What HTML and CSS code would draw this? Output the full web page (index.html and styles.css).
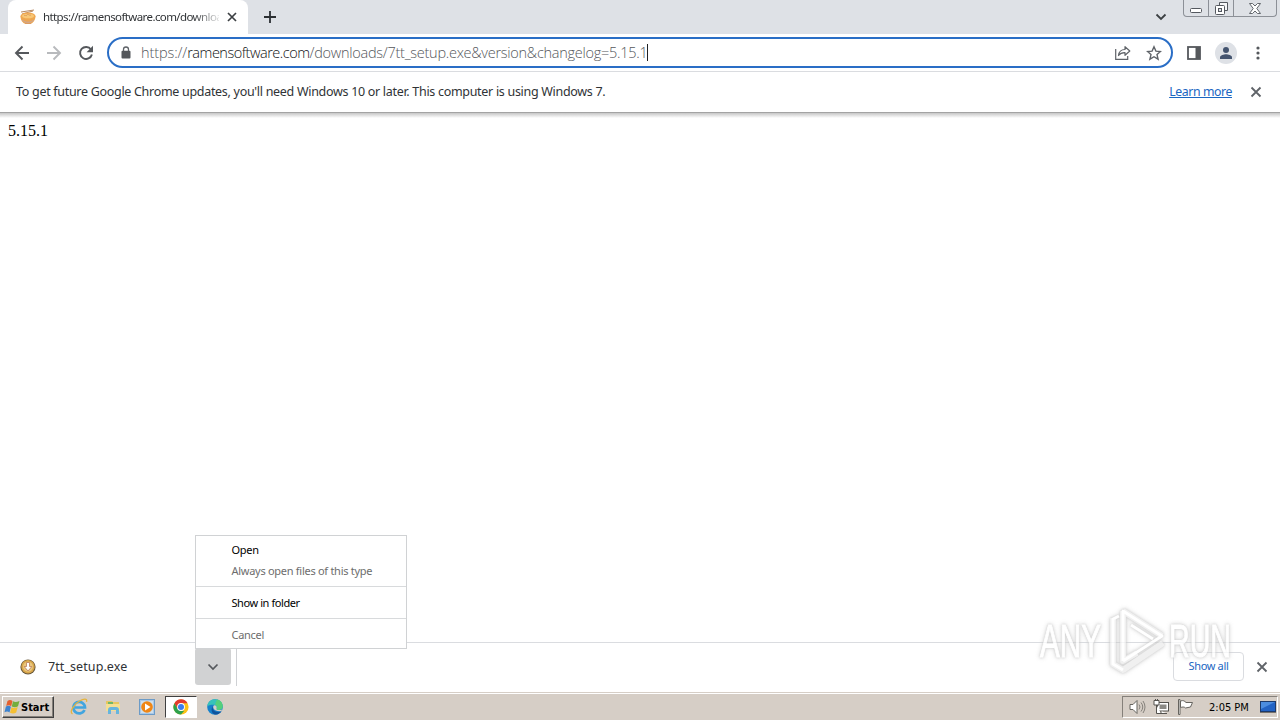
FILE: index.html
```html
<!DOCTYPE html>
<html lang="en">
<head>
  <meta charset="UTF-8">
  <title>https://ramensoftware.com/downloads</title>
  <link rel="stylesheet" href="styles.css">
</head>
<body>

<div class="desktop">

  <!-- Tab strip -->
  <div class="tab-strip">
    <div class="tab">
      <svg class="favicon" width="16" height="16" viewBox="0 0 16 16">
        <path d="M1 3l13-2M2 5l11-3" stroke="#b98a62" stroke-width="1" fill="none"/>
        <path d="M.5 7h15c0 4-2.500 7-5 8h-5c-3-1-5-4-5-8z" fill="#eba654"/>
        <ellipse cx="8" cy="7" rx="7.500" ry="3.500" fill="#f0a850"/>
        <ellipse cx="8" cy="7" rx="6" ry="2.300" fill="#f8c877"/>
        <path d="M4 7c1-2 2 1 3-1s2 1 4 0M5 14.500h6" stroke="#dd9c60" fill="none"/>
        <path d="M2.500 11c1.500 3 9.500 3 11 0" stroke="#c9a6a0" fill="none"/>
      </svg>
      <span class="tab-title">https://ramensoftware.com/downloa</span>
      <svg class="tab-close" width="10" height="10" viewBox="0 0 10 10"><path d="M1 1l8 8M9 1l-8 8" stroke="#3c4043" stroke-width="1.700"/></svg>
    </div>
    <svg class="new-tab" width="12" height="12" viewBox="0 0 12 12"><path d="M6 0v12M0 6h12" stroke="#2b2f33" stroke-width="1.800"/></svg>
    <svg class="tab-search" width="12" height="8" viewBox="0 0 12 8"><path d="M1.500 1.500L6 6l4.500-4.500" fill="none" stroke="#3c4043" stroke-width="1.800"/></svg>
    <div class="window-buttons">
      <span class="win-min"><svg width="13" height="5" viewBox="0 0 13 5"><rect x=".5" y=".5" width="11" height="4" rx="1" fill="#fff" stroke="#54585f"/></svg></span>
      <span class="win-max"><svg width="13" height="13" viewBox="0 0 13 13"><path d="M4.500 3.500v-3h8v8h-3" fill="#f5f6f8" stroke="#54585f"/><rect x=".5" y="3.500" width="9" height="9" rx="1" fill="#fff" stroke="#54585f"/><rect x="3.500" y="6.500" width="3" height="3" fill="#dee1e6" stroke="#54585f"/></svg></span>
      <span class="win-close"><svg width="12" height="11" viewBox="0 0 12 11"><path d="M.5.500h3L6 3 8.500.500h3L7.800 5.500l3.700 5h-3L6 8l-2.500 2.500h-3l3.700-5z" fill="#fff" stroke="#54585f" stroke-width=".9"/></svg></span>
    </div>
  </div>

  <!-- Toolbar -->
  <div class="toolbar">
    <div class="nav">
      <svg width="16" height="16" viewBox="0 0 16 16"><path d="M15 8H2.500M8.500 1.500L2 8l6.500 6.500" fill="none" stroke="#55585c" stroke-width="1.900"/></svg>
      <svg width="16" height="16" viewBox="0 0 16 16"><path d="M1 8h12.500M7.500 1.500L14 8l-6.500 6.500" fill="none" stroke="#b8babd" stroke-width="1.900"/></svg>
      <svg width="16" height="16" viewBox="0 0 16 16"><path d="M13 4.500A6 6 0 1 0 13.900 9.500" fill="none" stroke="#55585c" stroke-width="1.900"/><path d="M15 .8v6.400H8.600z" fill="#55585c"/></svg>
    </div>
    <div class="omnibox">
      <svg class="lock" width="10" height="13" viewBox="0 0 10 13"><path d="M2.500 6V3.500a2.500 2.500 0 0 1 5 0V6" fill="none" stroke="#5f6368" stroke-width="1.300"/><rect x=".5" y="4.800" width="9" height="7.700" rx="1" fill="#55585c"/></svg>
      <span class="url">https://<span class="host">ramensoftware.com</span><span class="path">/downloads/7tt_setup.exe&amp;version&amp;changelog=5.15.1</span></span>
      <span class="caret"></span>
      <svg class="share" width="16" height="15" viewBox="0 0 16 15"><path d="M.700 4v10.300h12V11" fill="none" stroke="#5f6368" stroke-width="1.200"/><path d="M3.500 10.500c.5-4 3-6 6.500-6V1.700l4.800 4.300-4.800 4.300V7.700c-3-.1-5 .8-6.500 2.800z" fill="none" stroke="#5f6368" stroke-width="1.200" stroke-linejoin="round"/></svg>
      <svg class="star" width="16" height="16" viewBox="0 0 16 16"><path d="M8 1.800l1.900 4.300 4.600.4L11 9.600l1.100 4.600L8 11.700l-4.100 2.500L5 9.600 1.500 6.500l4.600-.4z" fill="none" stroke="#5f6368" stroke-width="1.400"/></svg>
    </div>
    <svg class="side-panel" width="14" height="14" viewBox="0 0 14 14"><rect x="1" y="1" width="12" height="12" fill="#fff" stroke="#55585c" stroke-width="1.800"/><path d="M8.500 1H13v12H8.500z" fill="#55585c"/></svg>
    <span class="avatar"><svg width="14" height="12" viewBox="0 0 14 12"><circle cx="7" cy="3" r="3" fill="#44546f"/><path d="M1 12v-1.600C1 8 5 7.200 7 7.200s6 .8 6 3.200V12z" fill="#44546f"/></svg></span>
    <svg class="more" width="4" height="14" viewBox="0 0 4 14"><circle cx="2" cy="2" r="1.600" fill="#55585c"/><circle cx="2" cy="7" r="1.600" fill="#55585c"/><circle cx="2" cy="12" r="1.600" fill="#55585c"/></svg>
  </div>

  <!-- Info bar -->
  <div class="infobar">
    <span class="infobar-text">To get future Google Chrome updates, you'll need Windows 10 or later. This computer is using Windows 7.</span>
    <a class="learn-more">Learn more</a>
    <svg class="infobar-close" width="12" height="12" viewBox="0 0 12 12"><path d="M1.500 1.500l9 9M10.500 1.500l-9 9" stroke="#5f6368" stroke-width="1.800"/></svg>
  </div>

  <!-- Page content -->
  <div class="page">5.15.1</div>

  <!-- Download shelf -->
  <div class="shelf">
    <svg class="file-icon" width="16" height="16" viewBox="0 0 16 16">
      <circle cx="8" cy="8" r="7.600" fill="#69593c"/>
      <circle cx="8" cy="7.700" r="6.700" fill="#d9a64b"/>
      <circle cx="8" cy="7.700" r="5" fill="#e9c77e"/>
      <path d="M6.500 3.500h3v4h2.300L8 12 4.200 7.500h2.300z" fill="#fff" stroke="#b56f4b" stroke-width=".7"/>
    </svg>
    <span class="file-name">7tt_setup.exe</span>
    <div class="file-menu-button"><svg width="12" height="8" viewBox="0 0 12 8"><path d="M1.500 1.500L6 6l4.500-4.500" fill="none" stroke="#55585c" stroke-width="1.700"/></svg></div>
    <span class="shelf-divider"></span>
    <div class="show-all">Show all</div>
    <svg class="shelf-close" width="12" height="12" viewBox="0 0 12 12"><path d="M1.500 1.500l9 9M10.500 1.500l-9 9" stroke="#5f6368" stroke-width="1.800"/></svg>
  </div>

  <!-- Taskbar -->
  <div class="taskbar">
    <div class="start">
      <svg width="17" height="16" viewBox="0 0 16 16">
        <path d="M3 2c2-1.500 3.500-1 5 0L6.700 7.200c-1.500-1-3-1.200-5-.2z" fill="#e4602f"/>
        <path d="M8.500 2.300c1.700 1 3.500 1 6.500-.3l-1.500 5.200c-2 1.200-4 1.200-6.200.3z" fill="#74ad3d"/>
        <path d="M1.400 7.500c2-1 3.500-.8 5 .2L5 13.400c-1.500-1-3-1.100-5-.1z" fill="#3d83cf"/>
        <path d="M7 8.200c1.700 1 3.500 1 6.200-.2l-1.500 5.500c-2 1.200-4 1.200-6.200.2z" fill="#f5bf32"/>
      </svg>
      <span>Start</span>
    </div>
    <div class="quick-launch">
      <span class="task">
        <svg width="18" height="18" viewBox="0 0 18 18"><path d="M14.500 12A5.800 5.800 0 1 1 15 9.500H5" fill="none" stroke="#42a5df" stroke-width="2.700"/><path d="M2.500 16C-1 14 4 6 9.500 3c4-2.500 8-3 7 .8" fill="none" stroke="#e5b43d" stroke-width="1.300"/></svg>
      </span>
      <span class="task">
        <svg width="16" height="16" viewBox="0 0 16 16"><path d="M1 2h6l1 1h6v9H1z" fill="#e8c760"/><path d="M3 3h5v3H3z" fill="#6fb869"/><path d="M1 5h14v7H1z" fill="#f5df93"/><path d="M3 15v-4c0-2 1-3 3-3h5c2 0 3 1 3 3v4h-3v-4H6v4z" fill="#67b5dd"/></svg>
      </span>
      <span class="task">
        <svg width="16" height="16" viewBox="0 0 16 16"><rect x=".5" y=".5" width="15" height="15" fill="#a9c9e8" stroke="#6c9bc7"/><rect x="2" y="2" width="12" height="12" fill="#cfdfeb"/><circle cx="8" cy="8" r="5.800" fill="#ef8615"/><path d="M6 4.500v7L11.500 8z" fill="#fff"/></svg>
      </span>
      <span class="task task-active">
        <svg width="16" height="16" viewBox="0 0 16 16"><circle cx="8" cy="8" r="7.600" fill="#fbc116"/><path d="M1.400 4.200A7.600 7.600 0 0 1 14.600 4.200H8L4.700 9.900z" fill="#e33b2e"/><path d="M1.400 4.200l3.300 5.700L8 11.800h3.300L8 15.600A7.600 7.600 0 0 1 1.400 4.200z" fill="#2da14c"/><circle cx="8" cy="8" r="3.900" fill="#fff"/><circle cx="8" cy="8" r="3" fill="#3b7ded"/></svg>
      </span>
      <span class="task">
        <svg width="16" height="16" viewBox="0 0 16 16"><circle cx="8" cy="8" r="7.800" fill="#1681cb"/><path d="M.300 7C1 2.500 4 .2 8 .2c5 0 7.700 3.500 7.700 7 0 2.500-2 3.800-4 3.800-2.500 0-3-.8-2.200-1.700C11 7 7 3.800.3 7z" fill="#37c2ba"/><path d="M10 .5c4 .8 5.700 3.700 5.700 6.700 0 2.500-2 3.800-4 3.800-2.500 0-3-.8-2.200-1.700C10.500 7.600 9.500 6 8 5.500z" fill="#55cf7b"/><path d="M6 7c-1.500 4 3 7.500 8.500 5.200-1.500 2.200-4 3.500-6.500 3.400C4.500 14.500 3.500 10 6 7z" fill="#10539c"/><path d="M9.500 9.300C10.300 8 9 6 7 6.300 5 8 6.500 13 14.500 12.200l.5-1.700c-2 1-6.500.9-5.500-1.200z" fill="#d6cec6"/></svg>
      </span>
    </div>
    <div class="tray">
      <svg width="17" height="16" viewBox="0 0 17 16"><path d="M1 5.500h3l4-4v13l-4-4H1z" fill="#fff" stroke="#66645f"/><path d="M10 5.500q2 2.500 0 5M12 3.500q3.500 4.500 0 9M14 2q4 6 0 12" fill="none" stroke="#85817b"/></svg>
      <svg width="17" height="16" viewBox="0 0 17 16"><rect x="4.500" y="3.500" width="11" height="8.500" fill="#fff" stroke="#54524e"/><rect x="6.500" y="5.500" width="7" height="4.500" fill="#8b8985"/><path d="M8 12v2.500h6M1 1.500h5v4.500H1zM2.500 0v2M4.500 0v2M3.500 6v8.500H8" fill="#fff" stroke="#54524e"/></svg>
      <svg width="17" height="16" viewBox="0 0 17 16"><path d="M1.500.500v15h1.500V.500z" fill="#fff" stroke="#66645f"/><path d="M3.500 2c3-1 4 0 5.500 1.500h6.500L13.500 8l-5 1C7 7.500 5.500 8 3.500 8.500z" fill="#fff" stroke="#66645f"/></svg>
      <span class="clock">2:05 PM</span>
      <svg class="show-desktop" width="16" height="13" viewBox="0 0 16 13"><rect x=".5" y=".5" width="15" height="10" fill="#2363c4" stroke="#1d3a6b"/><path d="M1 1h14L1 8z" fill="#4c8de0"/><path d="M0 11.500h16" stroke="#77726d"/></svg>
    </div>
  </div>

  <!-- Download item menu -->
  <div class="menu">
    <div class="menu-item">Open</div>
    <div class="menu-item disabled">Always open files of this type</div>
    <div class="menu-sep"></div>
    <div class="menu-item folder">Show in folder</div>
    <div class="menu-sep"></div>
    <div class="menu-item disabled">Cancel</div>
  </div>

  <!-- Watermark -->
  <svg class="watermark" width="204" height="70" viewBox="0 0 204 70">
    <text x="5" y="52" textLength="61" lengthAdjust="spacingAndGlyphs">ANY</text>
    <text x="134" y="52" textLength="62" lengthAdjust="spacingAndGlyphs">RUN</text>
    <path class="mark-edge" d="M78 13v46l10 6 40-27M88 6l39 25M88 6v50l14-8"/>
    <path class="mark-line" d="M84 11l-6 3v45l10 6M88 56V6l39 25-39 25M96 20l22 14"/>
  </svg>

</div>

</body>
</html>
```
FILE: styles.css
```css
body {
  margin: 0;
  font-family: "DejaVu Sans Condensed", "Noto Sans", sans-serif;
  background: #fff;
  overflow: hidden;
}

svg {
  display: block;
  flex: none;
}

.desktop {
  position: relative;
  width: 1280px;
  height: 720px;
  display: flex;
  flex-direction: column;
  overflow: hidden;
  white-space: nowrap;
}

/* tab strip */
.tab-strip {
  height: 34px;
  display: flex;
  background: #dee1e6;
}

.tab {
  width: 240px;
  box-sizing: border-box;
  margin-left: 8px;
  padding: 0 11px 0 12px;
  display: flex;
  align-items: center;
  background: #fff;
  border-radius: 8px 8px 0 0;
}

.tab-title {
  width: 176px;
  margin-left: 7px;
  padding-bottom: 1px;
  font-family: "Noto Sans", sans-serif;
  font-size: 11.5px;
  letter-spacing: -0.6px;
  color: #303336;
  -webkit-mask-image: linear-gradient(to right, #000 150px, transparent 180px);
  mask-image: linear-gradient(to right, #000 150px, transparent 180px);
}

.tab-close {
  margin-left: 8px;
}

.new-tab {
  margin: 11px 0 0 16px;
}

.tab-search {
  margin: 13px 16px 0 auto;
}

.window-buttons {
  width: 94px;
  height: 17px;
  box-sizing: border-box;
  margin-right: 3px;
  display: flex;
  border: 1px solid #8c9097;
  border-top: 0;
  border-radius: 0 0 4px 4px;
}

.window-buttons span {
  box-sizing: border-box;
  display: flex;
  justify-content: center;
  align-items: center;
}

.win-min {
  width: 25px;
  padding-top: 4px;
  border-right: 1px solid #8c9097;
}

.win-max {
  width: 25px;
  border-right: 1px solid #8c9097;
}

.win-close {
  width: 42px;
}

/* toolbar */
.toolbar {
  height: 38px;
  box-sizing: border-box;
  display: flex;
  align-items: center;
  border-bottom: 1px solid #dadce0;
}

.nav {
  display: flex;
  gap: 16px;
  margin-left: 14px;
}

.omnibox {
  width: 1066px;
  height: 31px;
  box-sizing: border-box;
  margin-left: 13px;
  padding: 0 9px 0 12px;
  display: flex;
  align-items: center;
  border: 2px solid #2a6ec6;
  border-radius: 16px;
}

.url {
  margin-left: 10px;
  font-family: "Open Sans", sans-serif;
  font-size: 14.5px;
  font-weight: 300;
  letter-spacing: -0.1px;
  color: #54575b;
}

.host {
  letter-spacing: -0.48px;
  color: #101113;
}

.path {
  letter-spacing: -0.27px;
}

.caret {
  width: 1px;
  height: 17px;
  background: #202124;
}

.share {
  margin-left: auto;
}

.star {
  margin-left: 15px;
}

.side-panel {
  margin-left: 14px;
}

.avatar {
  width: 22px;
  height: 22px;
  margin-left: 14px;
  display: flex;
  align-items: center;
  justify-content: center;
  border-radius: 50%;
  background: #dee1e6;
}

.more {
  margin-left: 19px;
}

/* info bar */
.infobar {
  height: 40px;
  box-sizing: border-box;
  display: flex;
  align-items: center;
  padding: 0 18px 0 16px;
  font-family: "Noto Sans", sans-serif;
  font-size: 12.5px;
  letter-spacing: -0.3px;
  color: #303336;
}

.infobar-text,
.learn-more {
  padding-bottom: 2px;
}

.learn-more {
  margin-left: auto;
  font-size: 12.3px;
  letter-spacing: -0.4px;
  color: #1a66c2;
  text-decoration: underline;
}

.infobar-close {
  margin-left: 18px;
}

/* page */
.page {
  flex: 1;
  padding: 9px 8px;
  border-top: 1px solid #a3a3a3;
  background: linear-gradient(#c6c6c6, #fff 5px);
  font-family: "Liberation Serif", serif;
  font-size: 16px;
  color: #000;
}

/* download shelf */
.shelf {
  height: 50px;
  box-sizing: border-box;
  display: flex;
  align-items: center;
  padding: 0 12px 2px 20px;
  border-top: 1px solid #dadce0;
}

.file-name {
  width: 147px;
  margin-left: 12px;
  font-family: "Noto Sans", sans-serif;
  font-size: 12.5px;
  letter-spacing: 0.08px;
  color: #303336;
}

.file-menu-button {
  width: 36px;
  height: 37px;
  display: flex;
  align-items: center;
  justify-content: center;
  background: #d1d2d3;
  border-radius: 3px;
}

.shelf-divider {
  width: 1px;
  height: 38px;
  margin-left: 5px;
  background: #cfd1d4;
}

.show-all {
  width: 71px;
  height: 29px;
  box-sizing: border-box;
  margin-left: auto;
  border: 1px solid #dadce0;
  border-radius: 4px;
  font-family: "Noto Sans", sans-serif;
  font-size: 11px;
  letter-spacing: -0.35px;
  line-height: 25px;
  text-align: center;
  color: #1a66c2;
}

.shelf-close {
  margin-left: 12px;
}

/* taskbar */
.taskbar {
  height: 28px;
  box-sizing: border-box;
  display: flex;
  align-items: center;
  padding: 1px 2px 0 2px;
  background: #d6cec6;
  border-top: 1px solid #d6cec6;
  box-shadow: inset 0 1px 0 #fff;
}

.start {
  width: 52px;
  height: 22px;
  box-sizing: border-box;
  display: flex;
  align-items: center;
  padding-left: 1px;
  border: 1px solid;
  border-color: #fff #404040 #404040 #fff;
  box-shadow: inset -1px -1px 0 #85807a;
  font-size: 11px;
  font-weight: bold;
  color: #000;
}

.quick-launch {
  display: flex;
  margin-left: 9px;
  gap: 2px;
}

.task {
  width: 32px;
  height: 22px;
  box-sizing: border-box;
  display: flex;
  align-items: center;
  justify-content: center;
}

.task-active {
  background: #fff;
  border: 1px solid;
  border-color: #404040 #fff #fff #404040;
}

.tray {
  width: 156px;
  height: 22px;
  box-sizing: border-box;
  margin-left: auto;
  display: flex;
  align-items: center;
  gap: 7px;
  padding-left: 6px;
  border: 1px solid;
  border-color: #85807a #fff #fff #85807a;
}

.clock {
  margin-left: 8px;
  font-size: 11px;
  color: #000;
}

.show-desktop {
  margin-left: 4px;
}

/* download item menu */
.menu {
  position: absolute;
  left: 195px;
  top: 535px;
  width: 212px;
  height: 114px;
  box-sizing: border-box;
  padding-top: 3px;
  background: #fff;
  border: 1px solid #d0d2d4;
  font-family: "Noto Sans", sans-serif;
  font-size: 11px;
  letter-spacing: -0.28px;
  color: #000;
}

.menu-item {
  height: 21px;
  padding-left: 35.5px;
  line-height: 21px;
}

.menu-item.folder {
  letter-spacing: -0.42px;
}

.menu-item.disabled {
  color: #6d6d6d;
}

.menu-sep {
  height: 1px;
  margin: 5px 0;
  background: #d8dadc;
}

/* watermark */
.watermark {
  position: absolute;
  left: 1035px;
  top: 605px;
  opacity: 0.75;
  fill: #fff;
  font-family: "Liberation Sans", sans-serif;
  font-size: 46px;
  filter: drop-shadow(0 0 1px #c4c4c4) drop-shadow(0 0 2px #cccccc);
}

.watermark text {
  stroke: #fff;
  stroke-width: 1;
}

.mark-edge {
  fill: none;
  stroke: #ececec;
  stroke-width: 6;
  stroke-linejoin: round;
}

.mark-line {
  fill: none;
  stroke: #fff;
  stroke-width: 3;
  stroke-linejoin: round;
}
```
